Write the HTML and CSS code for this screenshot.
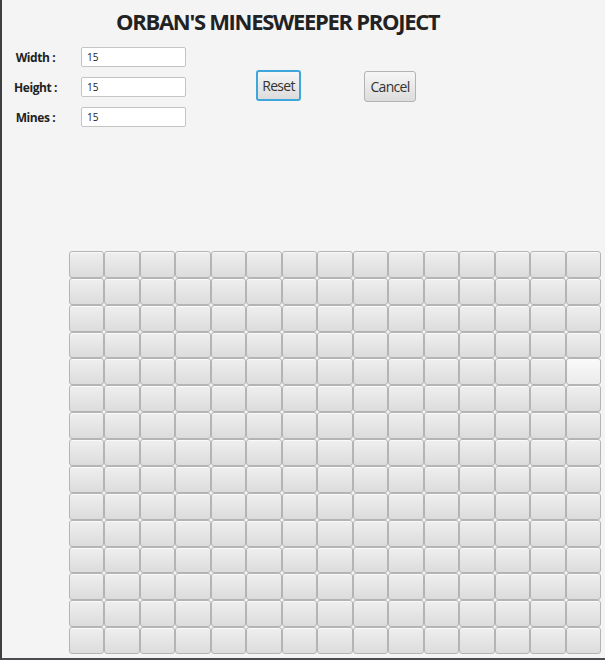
FILE: index.html
```html
<!DOCTYPE html>
<html>
<head>
<meta charset="utf-8">
<link rel="stylesheet" href="styles.css">
</head>
<body>
<div class="window">
  <h1 class="title">ORBAN'S MINESWEEPER PROJECT</h1>
  <div class="top">
    <div class="form">
      <div class="row"><label class="lbl">Width :</label><input class="field" type="text" value="15"></div>
      <div class="row"><label class="lbl">Height :</label><input class="field" type="text" value="15"></div>
      <div class="row"><label class="lbl">Mines :</label><input class="field" type="text" value="15"></div>
    </div>
    <button class="btn btn-reset">Reset</button>
    <button class="btn btn-cancel">Cancel</button>
  </div>
  <div class="board" id="board"></div>
</div>
<script>
  var b = document.getElementById('board');
  for (var i = 0; i < 225; i++) {
    var c = document.createElement('div');
    c.className = (i === 74) ? 'cell cell-hover' : 'cell';
    b.appendChild(c);
  }
</script>
</body>
</html>
```
FILE: styles.css
```css
html, body {
  margin: 0;
  padding: 0;
  background: #f4f4f4;
}
.window {
  width: 605px;
  height: 660px;
  box-sizing: border-box;
  border-left: 2px solid #3d3f42;
  border-bottom: 2px solid #4a4c50;
  background: #f4f4f4;
  font-family: "Open Sans", "Liberation Sans", sans-serif;
  color: #222;
  overflow: hidden;
}
.title {
  margin: 0;
  padding: 6px 0 0 114px;
  font-size: 22px;
  line-height: 30px;
  font-weight: 700;
  color: #222;
  letter-spacing: -1.3px;
}
.top {
  display: flex;
  align-items: flex-start;
  margin-top: 11px;
}
.form {
  display: flex;
  flex-direction: column;
  gap: 10px;
}
.row {
  display: flex;
  align-items: center;
}
.lbl {
  width: 67px;
  text-align: center;
  font-size: 12px;
  font-weight: 700;
  color: #222;
  letter-spacing: -0.4px;
}
.field {
  box-sizing: border-box;
  width: 105px;
  height: 20px;
  margin: 0 0 0 12px;
  padding: 0 5px;
  border: 1px solid #c4c4c4;
  border-radius: 2px;
  background: #fff;
  font-family: "Open Sans", sans-serif;
  font-size: 10px;
  color: #222;
  outline: none;
}
.btn {
  box-sizing: border-box;
  height: 31px;
  padding: 0;
  border: 1px solid #b3b3b3;
  border-radius: 3px;
  background: linear-gradient(#f6f6f6, #dcdcdc);
  font-family: "Open Sans", sans-serif;
  font-size: 14px;
  color: #333;
  letter-spacing: -0.7px;
}
.btn-reset {
  width: 45px;
  margin: 23px 0 0 70px;
  border: 2px solid #3ea6db;
}
.btn-cancel {
  width: 52px;
  margin: 24px 0 0 63px;
}
.board {
  display: grid;
  grid-template-columns: repeat(15, 1fr);
  grid-template-rows: repeat(15, 1fr);
  width: 532px;
  height: 403px;
  margin: 124px 0 0 67px;
}
.cell {
  box-sizing: border-box;
  border: 1px solid #b4b4b4;
  border-radius: 3px;
  background: linear-gradient(#efefef, #dcdcdc);
  box-shadow: inset 0 1px 0 #fafafa;
}
.cell-hover {
  background: linear-gradient(#fafafa, #ebebeb);
}
```
